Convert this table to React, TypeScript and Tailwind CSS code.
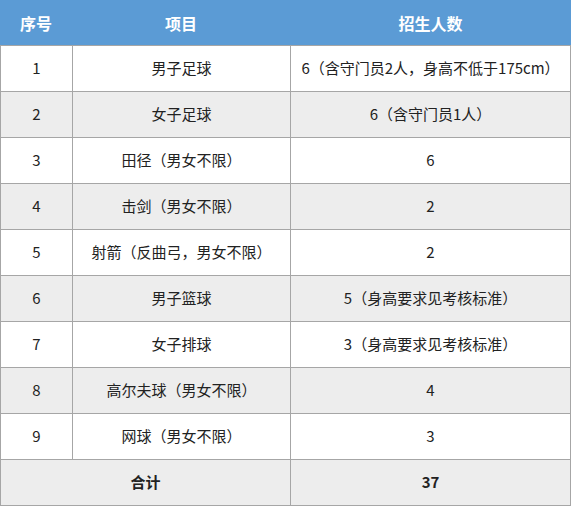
const rows = [
  { no: "1", item: "男子足球", count: "6（含守门员2人，身高不低于175cm）" },
  { no: "2", item: "女子足球", count: "6（含守门员1人）" },
  { no: "3", item: "田径（男女不限）", count: "6" },
  { no: "4", item: "击剑（男女不限）", count: "2" },
  { no: "5", item: "射箭（反曲弓，男女不限）", count: "2" },
  { no: "6", item: "男子篮球", count: "5（身高要求见考核标准）" },
  { no: "7", item: "女子排球", count: "3（身高要求见考核标准）" },
  { no: "8", item: "高尔夫球（男女不限）", count: "4" },
  { no: "9", item: "网球（男女不限）", count: "3" },
];

const font = "font-['Noto_Sans_CJK_SC','Noto_Sans',sans-serif]";

export default function App() {
  return (
    <div className={`w-[571px] bg-white ${font}`}>
      <div className="grid h-[45px] grid-cols-[72px_218px_281px] items-center bg-[#5b9bd5] text-[16px] font-bold text-white">
        <div className="text-center">序号</div>
        <div className="text-center">项目</div>
        <div className="text-center">招生人数</div>
      </div>

      <div className="border-r border-b border-[#a6a6a6]">
        {rows.map((r, i) => (
          <div
            key={r.no}
            className={`grid h-[46px] grid-cols-[72px_218px_280px] border-t border-[#a6a6a6] text-[15px] text-[#222] ${
              i % 2 === 1 ? "bg-[#ededed]" : "bg-white"
            }`}
          >
            <div className="flex items-center justify-center border-l border-[#a6a6a6]">{r.no}</div>
            <div className="flex items-center justify-center border-l border-[#a6a6a6]">{r.item}</div>
            <div className="flex items-center justify-center border-l border-[#a6a6a6]">{r.count}</div>
          </div>
        ))}

        <div className="grid h-[46px] grid-cols-[290px_280px] border-t border-[#a6a6a6] bg-[#ededed] text-[15px] font-bold text-[#222]">
          <div className="flex items-center justify-center border-l border-[#a6a6a6]">合计</div>
          <div className="flex items-center justify-center border-l border-[#a6a6a6]">37</div>
        </div>
      </div>
    </div>
  );
}
